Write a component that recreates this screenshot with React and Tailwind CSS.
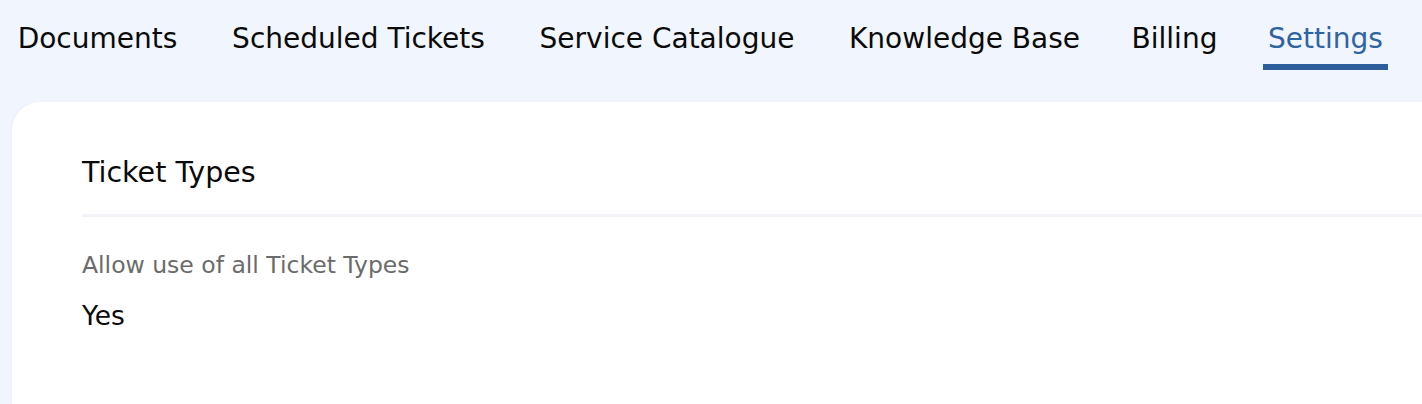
import React from 'react';

const tabs = [
  { label: 'Documents', w: 'w-[175px]' },
  { label: 'Scheduled Tickets', w: 'w-[265px]' },
  { label: 'Service Catalogue', w: 'w-[270px]' },
  { label: 'Knowledge Base', w: 'w-[243px]' },
  { label: 'Billing', w: 'w-[95px]' },
  { label: 'Settings', w: 'w-[125px]' },
];

export default function App() {
  const active = 'Settings';

  return (
    <div className="min-h-screen bg-[#f1f5fd] font-['DejaVu_Sans',sans-serif] overflow-hidden">
      {/* Tabs */}
      <nav className="flex gap-[41px] pl-[10px] pt-[23px]">
        {tabs.map((t) => (
          <div key={t.label} className={`flex flex-col shrink-0 ${t.w}`}>
            <span
              className={`text-center text-[28px] leading-[32px] whitespace-nowrap ${
                t.label === active ? 'text-[#2f64a3]' : 'text-[#0a0a0a]'
              }`}
            >
              {t.label}
            </span>
            <span className={`mt-[9px] h-[6px] ${t.label === active ? 'bg-[#2c5f9c]' : 'bg-transparent'}`} />
          </div>
        ))}
      </nav>

      {/* Card */}
      <div className="mt-[32px] ml-[12px] bg-white rounded-tl-[28px] pl-[70px] pt-[55px] pb-[80px] shadow-[-1px_0_3px_rgba(0,0,0,0.03)]">
        <h2 className="text-[28.5px] leading-[32px] text-[#0a0a0a] font-normal whitespace-nowrap">Ticket Types</h2>
        <div className="mt-[25px] h-[3px] bg-[#f1f3f6]" />
        <div className="mt-[34px] text-[23.5px] leading-[28px] text-[#6b6b6b] whitespace-nowrap">Allow use of all Ticket Types</div>
        <div className="mt-[23px] text-[26.5px] leading-[28px] text-[#0a0a0a]">Yes</div>
      </div>
    </div>
  );
}
